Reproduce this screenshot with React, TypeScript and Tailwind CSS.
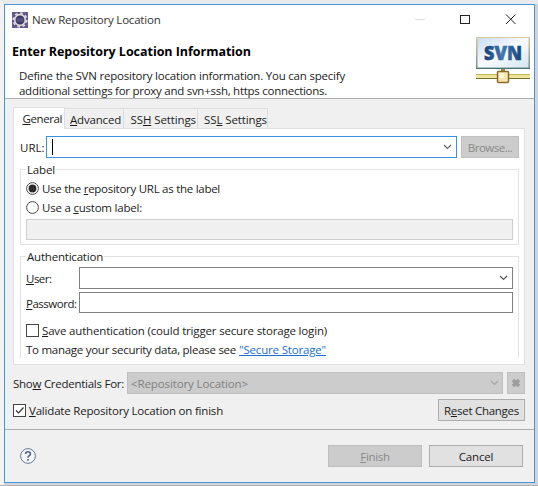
import React, { useLayoutEffect, useRef, useState } from "react";

type TProps = { w: number; className?: string; size?: string; children: React.ReactNode };

/* A single line of text tracked so that it fills the given width. */
function T({ w, className = "", size = "h-4 leading-[18px]", children }: TProps) {
  const ref = useRef<HTMLSpanElement>(null);
  const [ls, setLs] = useState(0);
  useLayoutEffect(() => {
    const el = ref.current;
    if (!el) return;
    const n = (el.textContent || "").length;
    setLs((w - el.getBoundingClientRect().width) / n);
  }, [w]);
  return (
    <span ref={ref} className={`inline-block shrink-0 self-start whitespace-pre ${size} ${className}`} style={{ letterSpacing: ls }}>
      {children}
    </span>
  );
}

const U = ({ children }: { children: React.ReactNode }) => (
  <span className="underline decoration-1 underline-offset-1">{children}</span>
);

const Chevron = ({ color }: { color: string }) => (
  <svg width="9" height="6" viewBox="0 0 9 6" fill="none" stroke={color} strokeWidth="1.2">
    <path d="M1 1l3.5 3.5L8 1" />
  </svg>
);

function EclipseIcon() {
  return (
    <svg width="16" height="16" viewBox="0 0 16 16">
      <rect width="16" height="16" fill="#66588f" />
      <circle cx="8" cy="8" r="6.7" fill="none" stroke="#d9d7d4" strokeWidth="2" strokeDasharray="2.6 2.66" />
      <circle cx="8" cy="8" r="5.3" fill="#4a4379" stroke="#dedcd8" strokeWidth="1.7" />
      <circle cx="8" cy="8" r="4.2" fill="#3d3768" />
      <path d="M4.5 7h7M4.5 9h7" stroke="#7b7399" strokeWidth=".8" />
    </svg>
  );
}

function SvnIcon() {
  return (
    <svg width="54" height="48" viewBox="0 0 54 48">
      <defs>
        <linearGradient id="panel" x1="0" y1="0" x2="1" y2="1">
          <stop offset="0" stopColor="#c9dcee" />
          <stop offset=".5" stopColor="#f8fbfe" />
          <stop offset="1" stopColor="#d5e4f2" />
        </linearGradient>
        <linearGradient id="frame" x1="0" y1="0" x2="0" y2="1">
          <stop offset="0" stopColor="#dfc7a0" />
          <stop offset="1" stopColor="#6c8d92" />
        </linearGradient>
        <linearGradient id="ink" x1="0" y1="0" x2="1" y2="0">
          <stop offset="0" stopColor="#153d77" />
          <stop offset=".5" stopColor="#4478ae" />
          <stop offset="1" stopColor="#173f7b" />
        </linearGradient>
      </defs>
      <rect x="0" y="1" width="54" height="32" fill="url(#frame)" />
      <rect x="1.5" y="2" width="51" height="29.5" fill="url(#panel)" />
      <path d="M0 32.5h54" stroke="#4f7476" />
      <text x="8" y="24" textLength="38" lengthAdjust="spacingAndGlyphs" fontFamily="Open Sans" fontWeight="800" fontSize="18.5" fill="url(#ink)" stroke="url(#ink)" strokeWidth=".5">SVN</text>
      <rect x="0" y="38" width="54" height="5" fill="#ece5a0" />
      <path d="M0 38.5h54" stroke="#c4b556" />
      <path d="M0 42.5h54" stroke="#7a7027" />
      <rect x="25" y="33" width="4" height="3" fill="#a18a3c" />
      <rect x="21.5" y="35.5" width="11" height="11" rx="1" fill="#f7e6ae" stroke="#8c6a2c" strokeWidth="1.5" />
      <rect x="23" y="37" width="5" height="5" fill="#fff7d9" />
    </svg>
  );
}

function Radio({ on }: { on?: boolean }) {
  return (
    <svg width="13" height="13" viewBox="0 0 13 13" className="shrink-0">
      <circle cx="6.5" cy="6.5" r="5.9" fill="#fff" stroke="#444" strokeWidth="1" />
      {on && <circle cx="6.5" cy="6.5" r="3.9" fill="#2b2b2b" />}
    </svg>
  );
}

export default function App() {
  return (
    <div className="h-[486px] w-[538px] overflow-hidden border-b border-[#b4b4b4] bg-[#d0d3da] font-['Open_Sans','Noto_Sans',sans-serif] text-[11.5px] text-[#1c1c1c]">
      <div className="h-[485px] border-l-4 border-t-4 border-l-[#f3f3f3] border-t-[#e8eaed]">
        <div className="flex h-[479px] w-[531px] flex-col border border-[#4a97d8] bg-[#f0f0f0]">
          <header className="flex h-[94px] flex-col border-b border-[#adadad] bg-white">
            <div className="flex h-[29px] items-center pl-[7px]">
              <EclipseIcon />
              <T w={128.5} className="ml-1 mt-[6px] text-[#333]">New Repository Location</T>
              <svg width="101" height="11" viewBox="0 0 101 11" fill="none" className="ml-[254.5px]">
                <path d="M0 5.5h10" stroke="#ddd" />
                <rect x="45.5" y="1.5" width="9" height="8" stroke="#222" />
                <path d="M91 .5l9.5 9.5M100.5 .5L91 10" stroke="#222" />
              </svg>
            </div>
            <div className="flex flex-1 justify-between pl-[7px] pr-[4px]">
              <div className="flex flex-col pt-[9px]">
                <T w={239} className="text-[12.5px] font-bold text-black">Enter Repository Location Information</T>
                <div className="mt-[9px] flex flex-col pl-[7px]">
                  <T w={326} size="h-[15px] leading-[15px]">Define the SVN repository location information. You can specify</T>
                  <T w={308} size="h-[15px] leading-[15px]">additional settings for proxy and svn+ssh, https connections.</T>
                </div>
              </div>
              <div className="pt-[2px]"><SvnIcon /></div>
            </div>
          </header>

          <main className="flex h-[331px] flex-col border-b border-[#adadad] pl-2 pr-[9px] pt-[7px]">
            <div className="flex h-[22px] items-end">
              <div className="z-10 -mb-px flex h-[22px] w-[52px] justify-end border border-b-0 border-[#dfdfdf] bg-white pr-[2px] pt-[2px]"><T w={39.5}><U>G</U>eneral</T></div>
              <div className="flex h-[20px] w-[59px] justify-end border-r border-t border-[#dcdcdc] pr-[2px] pt-[2px]"><T w={51}><U>A</U>dvanced</T></div>
              <div className="flex h-[20px] w-[74px] justify-end border-r border-t border-[#dcdcdc] pr-[1px] pt-[2px]"><T w={65.5}>SS<U>H</U> Settings</T></div>
              <div className="flex h-[20px] w-[70px] justify-end border-r border-t border-[#dcdcdc] pt-[2px]"><T w={63}>SS<U>L</U> Settings</T></div>
            </div>
            <section className="flex h-[237px] shrink-0 flex-col border border-[#dfdfdf] bg-white pl-[6px] pr-[5px] pt-[7px]">
              <div className="flex h-[22px] items-center">
                <T w={22} className="mt-[3px] w-[22px]">URL:</T>
                <div className="ml-1 flex h-[22px] w-[411px] items-center justify-between border border-[#3b92dc] bg-white pl-[5px] pr-[4px]">
                  <span className="h-4 w-px bg-black" />
                  <Chevron color="#666" />
                </div>
                <div className="ml-1 flex h-[22px] w-[58px] justify-center border border-[#bfbfbf] bg-[#cccccc] pt-[2px] text-[#8a8a8a]"><T w={44.5}>Browse...</T></div>
              </div>

              <fieldset className="mt-[3px] h-[84px] border border-[#e2e2e2] px-[5px]">
                <legend className="h-4 px-px leading-4"><span className="flex"><T w={28}>Label</T></span></legend>
                <div className="mt-[3px] flex h-4 items-center gap-[3px]"><Radio on /><T w={178}>Use the <U>r</U>epository URL as the label</T></div>
                <div className="mt-[3px] flex h-4 items-center gap-[3px]"><Radio /><T w={100}>Use a <U>c</U>ustom label:</T></div>
                <div className="mt-[4px] h-[21px] border border-[#cfcfcf] bg-[#f0f0f0]" />
              </fieldset>

              <fieldset className="mt-[3px] h-[110px] border border-b-0 border-[#e2e2e2] px-[5px]">
                <legend className="h-4 px-px leading-4"><span className="flex"><T w={76}>Authentication</T></span></legend>
                <div className="mt-[3px] flex h-[22px] items-center">
                  <div className="flex w-[53px]"><T w={25.5}><U>U</U>ser:</T></div>
                  <div className="flex h-[22px] flex-1 items-center justify-end border border-[#808080] pr-[4px]"><Chevron color="#555" /></div>
                </div>
                <div className="mt-[3px] flex h-[21px] items-center">
                  <div className="flex w-[53px]"><T w={50.5}><U>P</U>assword:</T></div>
                  <div className="h-[21px] flex-1 border border-[#808080]" />
                </div>
                <div className="mt-[9px] flex h-4 items-center gap-[3px]">
                  <span className="h-[13px] w-[13px] border border-[#444]" />
                  <T w={285}><U>S</U>ave authentication (could trigger secure storage login)</T>
                </div>
                <div className="mt-[3px] flex h-4 items-center gap-[3px]">
                  <T w={210}>To manage your security data, please see</T>
                  <T w={87} className="text-[#1a6fcb] underline underline-offset-1">"Secure Storage"</T>
                </div>
              </fieldset>
            </section>

            <div className="mt-[7px] flex h-[22px] shrink-0 items-center">
              <div className="flex w-[114px]"><T w={111}>Sho<U>w</U> Credentials For:</T></div>
              <div className="flex h-[22px] w-[376px] items-center justify-between border border-[#bfbfbf] bg-[#cccccc] pl-[3px] pr-[3px] text-[#808080]">
                <T w={117} className="mt-[2px]">&lt;Repository Location&gt;</T>
                <Chevron color="#a6a6a6" />
              </div>
              <div className="ml-1 flex h-[22px] w-[18px] items-center justify-center border border-[#bfbfbf] bg-[#cccccc]">
                <svg width="10" height="10" viewBox="0 0 10 10"><path d="M2 2l6 6M8 2L2 8" stroke="#9c9c9c" strokeWidth="3.4" /></svg>
              </div>
            </div>
            <div className="mt-[5px] flex h-[22px] shrink-0 items-center">
              <span className="flex h-[13px] w-[13px] items-center justify-center border border-[#444] bg-white">
                <svg width="11" height="11" viewBox="0 0 11 11" fill="none" stroke="#333" strokeWidth="1.2"><path d="M2 5.5l2.5 2.5L9.5 2.5" /></svg>
              </span>
              <T w={194} className="ml-[3px] mt-[3px]"><U>V</U>alidate Repository Location on finish</T>
              <div className="ml-auto flex h-[22px] w-[87px] justify-center border border-[#adadad] bg-[#e1e1e1] pt-[2px]"><T w={75}>R<U>e</U>set Changes</T></div>
            </div>
          </main>

          <footer className="flex flex-1 items-center pl-[15px] pr-[11px]">
            <svg width="16" height="16" viewBox="0 0 16 16" fill="none">
              <circle cx="8" cy="8" r="7.4" fill="#f5f6f8" stroke="#6a7b9c" strokeWidth="1" />
              <path d="M5.6 6.1C5.6 3 10.4 3 10.4 5.9C10.4 7.7 8 7.6 8 9.8M8 11v1.7" stroke="#586a90" strokeWidth="1.7" />
            </svg>
            <div className="ml-auto flex h-[22px] w-[94px] justify-center border border-[#bfbfbf] bg-[#cccccc] pt-[2px] text-[#8a8a8a]"><T w={29.5}><U>F</U>inish</T></div>
            <div className="ml-[7px] flex h-[22px] w-[94px] justify-center border border-[#adadad] bg-[#e1e1e1] pt-[2px]"><T w={34.5}>Cancel</T></div>
          </footer>
        </div>
      </div>
    </div>
  );
}
